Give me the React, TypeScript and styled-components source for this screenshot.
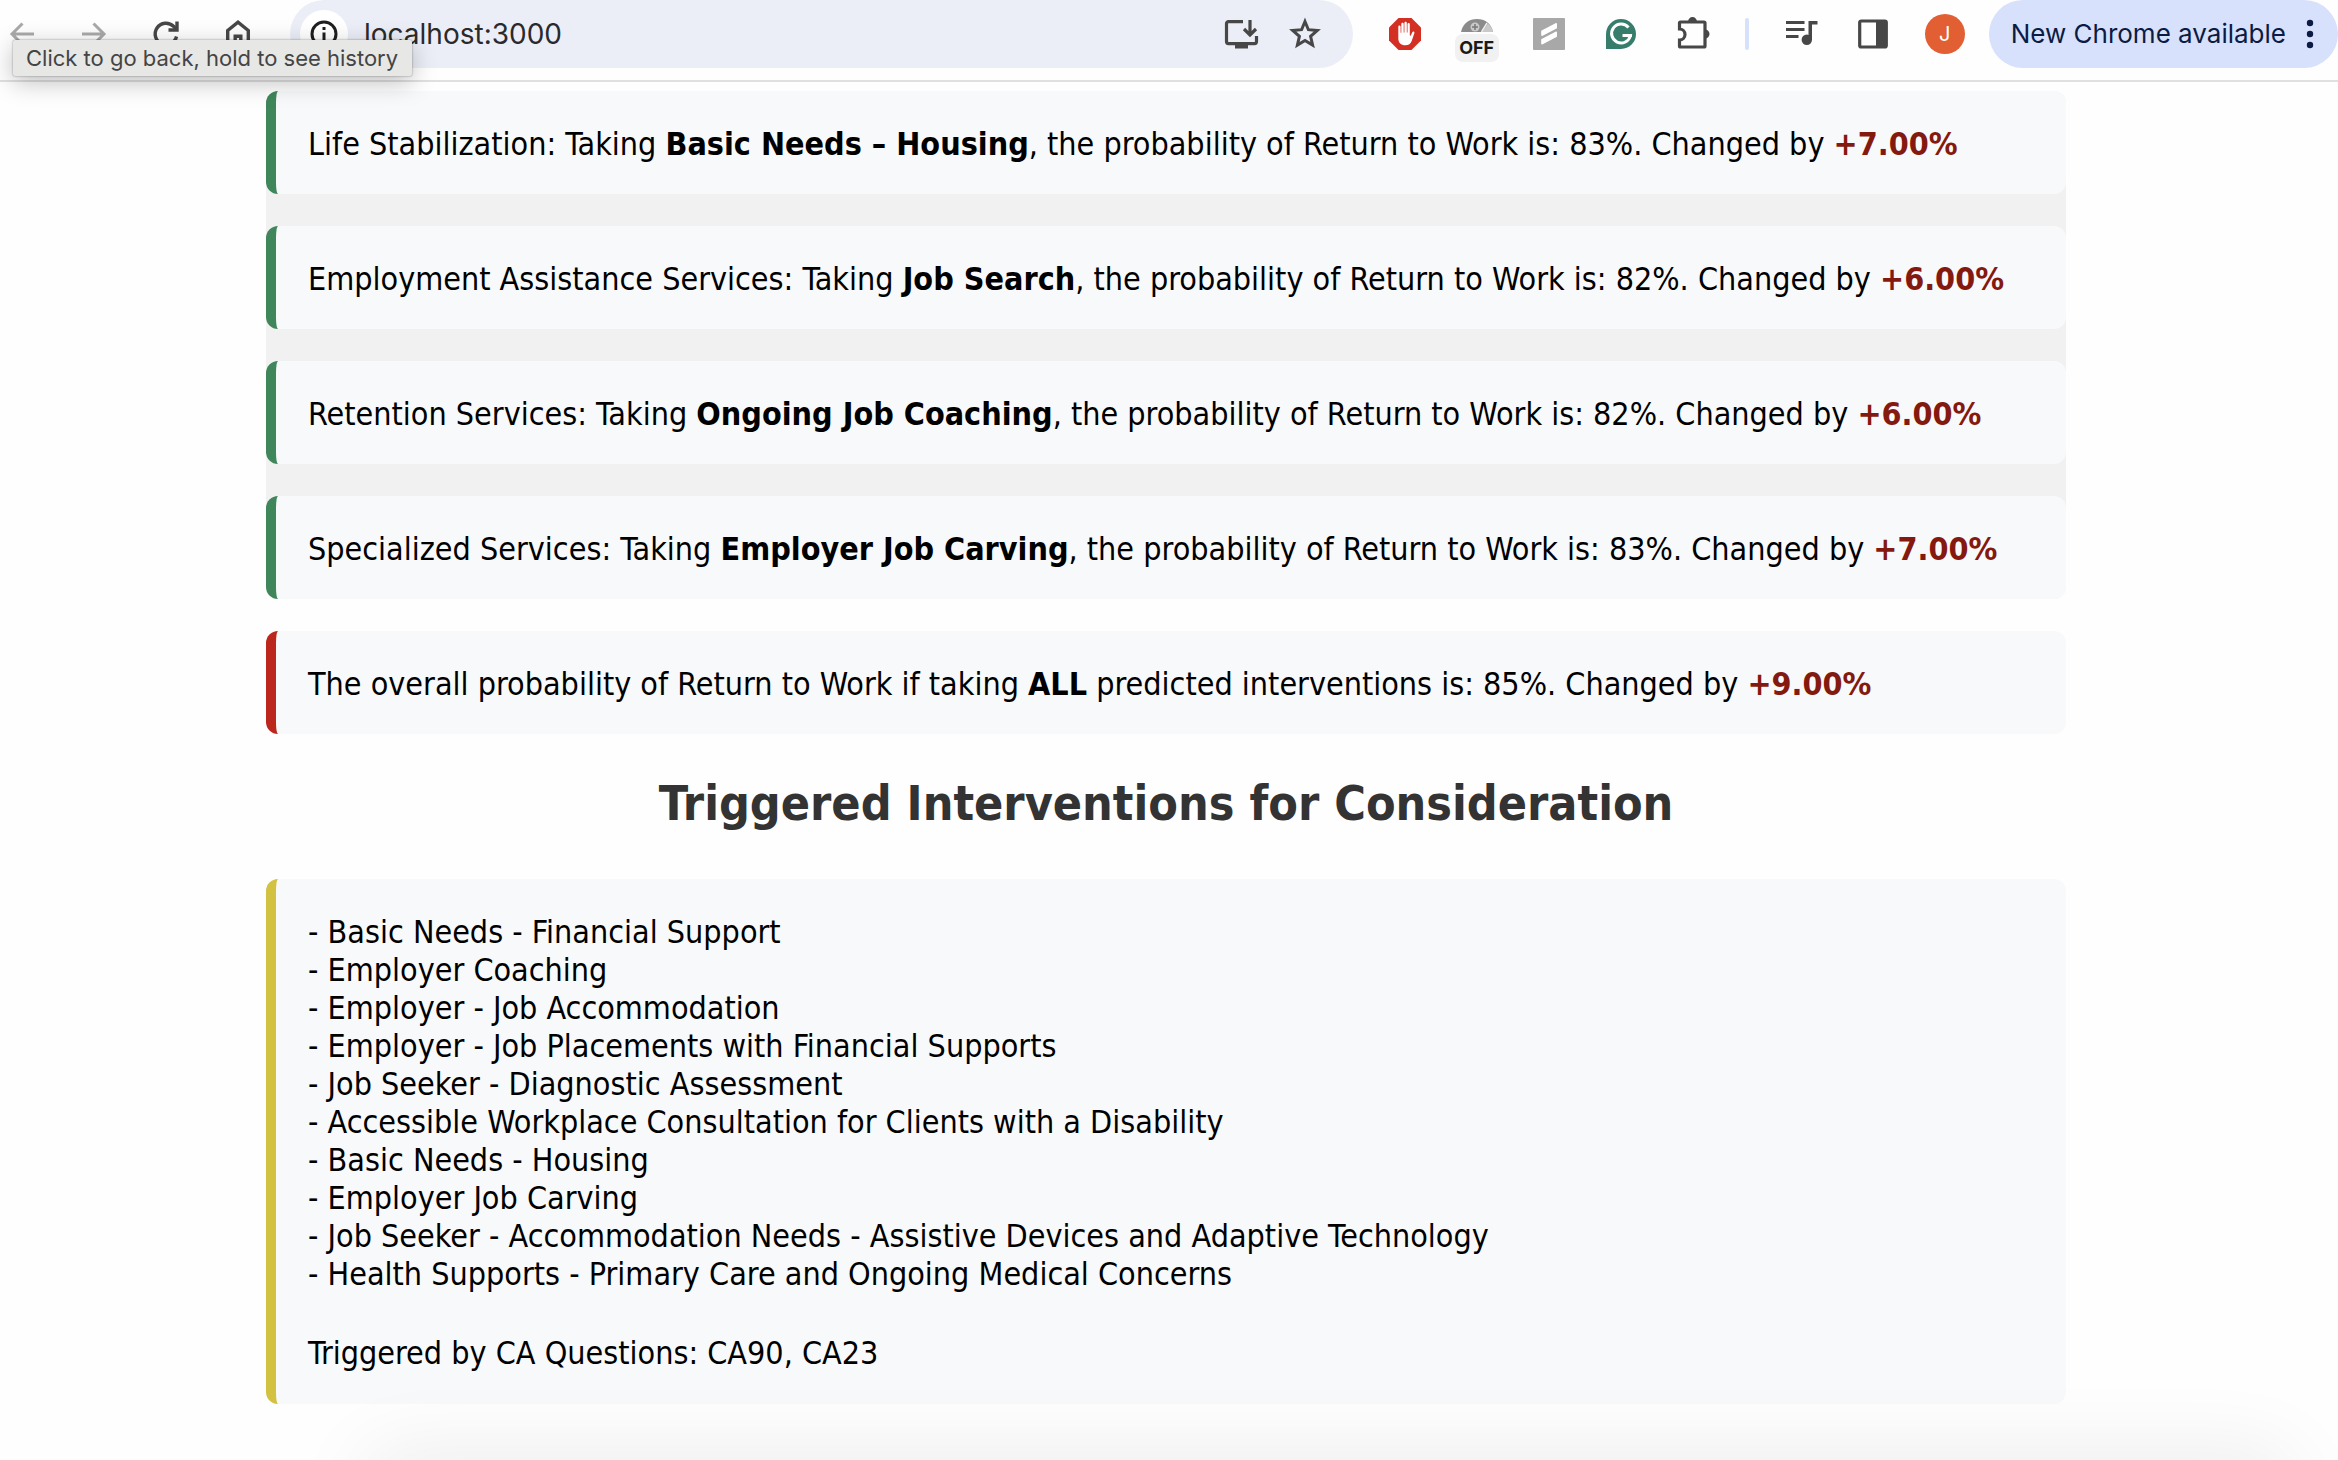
import React from "react";
import styled, { createGlobalStyle } from "styled-components";

const GlobalStyle = createGlobalStyle`
  *, *::before, *::after { box-sizing: border-box; }
  body {
    margin: 0;
    background: #fefefe;
    color: #000;
    font-family: Tahoma, "DejaVu Sans Condensed", "DejaVu Sans", sans-serif;
    font-size: 32px;
    line-height: 38px;
  }
`;

/* ---------- browser toolbar ---------- */

const uiFont = `Inter, Roboto, sans-serif`;

const Toolbar = styled.header`
  position: relative;
  display: flex;
  gap: 30px;
  height: 82px;
  padding-bottom: 12px;
  border-bottom: 2px solid #e0e0e0;
  background: #fefefe;
  font-family: ${uiFont};
`;

const ButtonGroup = styled.div<{ $tight?: boolean }>`
  display: flex;
  align-items: center;
  gap: ${(p) => (p.$tight ? 20 : 28)}px;
`;

const IconButton = styled.button<{ $color?: string }>`
  display: flex;
  align-items: center;
  justify-content: center;
  width: 44px;
  height: 48px;
  padding: 0;
  border: 0;
  background: none;
  color: ${(p) => p.$color ?? "#474747"};
`;

const AddressBar = styled.div`
  display: flex;
  flex: 1;
  align-items: center;
  gap: 16px;
  padding: 0 26px 0 10px;
  border-radius: 34px;
  background: #eceef7;
`;

const SiteInfo = styled(IconButton)`
  width: 48px;
  border-radius: 50%;
  background: #fff;
  color: #1f1f1f;
`;

const AddressInput = styled.input`
  flex: 1;
  min-width: 0;
  padding: 0;
  border: 0;
  outline: 0;
  background: none;
  color: #2a2a2c;
  font: 400 28px/36px ${uiFont};
`;

const Divider = styled.div`
  align-self: center;
  width: 4px;
  height: 32px;
  border-radius: 2px;
  background: #d6e2fb;
`;

const OffExtension = styled(IconButton)`
  flex-direction: column;
  align-self: flex-start;
  justify-content: flex-start;
  height: 62px;
  padding-top: 18px;
`;

const OffLabel = styled.span`
  flex: none;
  width: 44px;
  margin-top: 2px;
  border-radius: 8px;
  background: #f1f1f1;
  color: #1a1a1a;
  font: 700 18px/28px ${uiFont};
  text-align: center;
`;

const Avatar = styled.span`
  width: 40px;
  height: 40px;
  border-radius: 50%;
  background: #e25f34;
  color: #fff;
  font: 400 20px/40px ${uiFont};
  text-align: center;
  flex: none;
`;

const UpdateButton = styled.button`
  display: flex;
  align-items: center;
  gap: 20px;
  margin-left: -8px;
  padding: 0 24px 0 22px;
  border: 0;
  border-radius: 34px;
  background: #d7e1fb;
  color: #0b1b44;
  font: 400 26px/36px ${uiFont};
  white-space: nowrap;
`;

const Tooltip = styled.div`
  position: absolute;
  z-index: 2;
  top: 40px;
  left: 13px;
  padding: 4px 14px 4px 13px;
  border-radius: 2px;
  background: #e7e7e5;
  box-shadow: 0 0 2px rgba(0, 0, 0, 0.45), 0 6px 24px rgba(0, 0, 0, 0.25);
  color: #444;
  font: 400 22px/28px ${uiFont};
  white-space: nowrap;
`;

/* ---------- page ---------- */

const Page = styled.main`
  padding: 9px 38px 56px 32px;
`;

const Column = styled.div`
  max-width: 1800px;
  margin: 0 auto;
`;

const ServiceList = styled.section`
  display: flex;
  flex-direction: column;
  gap: 32px;
  margin-bottom: 32px;
  border-radius: 12px;
  background: #f1f1f1;
`;

const Card = styled.article<{ $accent: string }>`
  padding: 34px 32px 30px;
  border-left: 10px solid ${(p) => p.$accent};
  border-radius: 12px;
  background: #f8f9fb;
`;

const Sentence = styled.p`
  margin: 0;
  line-height: 39px;
`;

const Change = styled.strong`
  color: #84190f;
`;

const Heading = styled.h2`
  margin: 40px 0 47px;
  color: #333;
  font-size: 48px;
  line-height: 58px;
  text-align: center;
`;

const TriggerCard = styled(Card)`
  padding: 34px 32px 32px;
`;

const TriggerList = styled.ul`
  margin: 0 0 41px;
  padding: 0;
  list-style: none;
`;

const TriggerSource = styled.p`
  margin: 0;
`;

const BottomShade = styled.div`
  position: fixed;
  right: 60px;
  bottom: -50px;
  left: 380px;
  height: 40px;
  border-radius: 20px;
  box-shadow: 0 0 80px 20px rgba(0, 0, 0, 0.07);
  pointer-events: none;
`;

const services = [
  { area: "Life Stabilization", action: "Basic Needs – Housing", probability: 83, change: "+7.00%" },
  { area: "Employment Assistance Services", action: "Job Search", probability: 82, change: "+6.00%" },
  { area: "Retention Services", action: "Ongoing Job Coaching", probability: 82, change: "+6.00%" },
  { area: "Specialized Services", action: "Employer Job Carving", probability: 83, change: "+7.00%" },
];

const triggered = [
  "Basic Needs - Financial Support",
  "Employer Coaching",
  "Employer - Job Accommodation",
  "Employer - Job Placements with Financial Supports",
  "Job Seeker - Diagnostic Assessment",
  "Accessible Workplace Consultation for Clients with a Disability",
  "Basic Needs - Housing",
  "Employer Job Carving",
  "Job Seeker - Accommodation Needs - Assistive Devices and Adaptive Technology",
  "Health Supports - Primary Care and Ongoing Medical Concerns",
];

const Stroke = ({ size, children, w = 3 }: { size: number; w?: number; children: React.ReactNode }) => (
  <svg width={size} height={size} viewBox={`0 0 ${size} ${size}`} fill="none" stroke="currentColor" strokeWidth={w} aria-hidden="true">
    {children}
  </svg>
);

const BackIcon = () => (
  <Stroke size={32}><path d="M28 16H6M16.500 5.500L6 16l10.500 10.500" /></Stroke>
);
const ForwardIcon = () => (
  <Stroke size={32}><path d="M4 16h22M15.500 5.500L26 16 15.500 26.500" /></Stroke>
);
const ReloadIcon = () => (
  <Stroke size={32}>
    <path d="M26.500 18.500A10.800 10.800 0 1 1 23.500 8.300L27 11.800" strokeWidth="3.400" />
    <path d="M27 3.500V12h-8.500" strokeWidth="3.400" />
  </Stroke>
);
const HomeIcon = () => (
  <Stroke size={32} w={3.4}><path d="M5.700 26.500V12.500L16 4.200l10.300 8.300v14h-7.500v-8.300h-5.600v8.300z" /></Stroke>
);
const InfoIcon = () => (
  <Stroke size={32} w={3}>
    <circle cx="16" cy="16" r="12" />
    <path d="M16 14.500v8M16 9v3" />
  </Stroke>
);
const InstallIcon = () => (
  <svg width="36" height="32" viewBox="0 0 36 32" fill="none" stroke="currentColor" strokeWidth="3.200" aria-hidden="true">
    <path d="M20 3.600H5.500a2 2 0 0 0-2 2v18a2 2 0 0 0 2 2h26a2 2 0 0 0 2-2V18" />
    <path d="M27 2v14.500M21 11l6 6 6-6" />
    <path d="M12 25.500h13v5H12z" fill="currentColor" stroke="none" />
  </svg>
);
const StarIcon = () => (
  <Stroke size={36}>
    <path d="M18 5.500l3.400 8.200 8.900.8-6.700 5.900 2 8.700L18 24.400l-7.600 4.700 2-8.700-6.700-5.900 8.900-.8z" />
  </Stroke>
);
const BlockerIcon = () => (
  <svg width="32" height="32" viewBox="0 0 32 32" aria-hidden="true">
    <path d="M9.500 0h13L32 9.500v13L22.500 32h-13L0 22.500v-13z" fill="#d32f23" />
    <path d="M9.300 8.600c0-1.500 2.300-1.500 2.300 0v6.200h.7V6c0-1.600 2.400-1.600 2.400 0v8.500h.7V4.900c0-1.600 2.400-1.600 2.400 0v9.600h.7V6.100c0-1.500 2.300-1.500 2.300 0v11.300l.9.300 1.600-3.500c.7-1.400 2.500-.8 2.100.7l-2.700 8.200c-1 2.800-3 4.200-6.300 4.200-4.500 0-7.100-2.500-7.100-7z" fill="#fff" />
  </svg>
);
const DialIcon = () => (
  <svg width="32" height="14" viewBox="0 0 32 14" aria-hidden="true">
    <path d="M0 14C2 5 8 1 16 1s14 4 16 13z" fill="#8b8b8b" />
    <path d="M21 14l6-8.500c2.500 2 4.200 5 5 8.500z" fill="#c9c9c9" />
    <path d="M20.500 14l5.500-9" stroke="#eee" strokeWidth="1.500" />
    <circle cx="14" cy="9" r="4.500" fill="#c9c9c9" />
    <path d="M14 6v6M11 9h6" stroke="#777" strokeWidth="1.500" />
  </svg>
);
const SlashIcon = () => (
  <svg width="32" height="32" viewBox="0 0 32 32" aria-hidden="true">
    <rect width="32" height="32" rx="1" fill="#a8a8a8" />
    <path d="M8.200 12.800L22.500 5.200c.9-.4 1.500 0 1.500.8v4.200L9.700 17.800c-.9.400-1.500 0-1.500-.8z" fill="#fff" />
    <path d="M8.200 21.300l14.300-7.600c.9-.4 1.500 0 1.500.8v4.200L9.700 26.300c-.9.400-1.500 0-1.500-.8z" fill="#fff" />
  </svg>
);
const GrammarIcon = () => (
  <svg width="30" height="30" viewBox="0 0 30 30" fill="none" aria-hidden="true">
    <path d="M15 0a15 15 0 1 1 0 30H0V15A15 15 0 0 1 15 0z" fill="#377d6b" />
    <path d="M22.500 8.500A9.500 9.500 0 1 0 24.400 16.500H16.500" stroke="#fff" strokeWidth="3" />
    <path d="M21 16.500h5" stroke="#fff" strokeWidth="3" />
  </svg>
);
const PuzzleIcon = () => (
  <svg width="36" height="36" viewBox="0 0 36 36" fill="none" aria-hidden="true">
    <path d="M5.500 6H29a1 1 0 0 1 1 1v23a1 1 0 0 1-1 1H5.500a1 1 0 0 1-1-1v-6a5.300 5.300 0 0 0 0-11V7a1 1 0 0 1 1-1z" stroke="currentColor" strokeWidth="3.200" />
    <path d="M13 6a4.500 5 0 0 1 9 0zM30 13.500a4.500 4.500 0 0 1 0 9z" fill="currentColor" />
  </svg>
);
const QueueIcon = () => (
  <svg width="36" height="32" viewBox="0 0 36 32" fill="none" aria-hidden="true">
    <path d="M3 4.500h18.500M3 11.500h18.500M3 18.500h12.500" stroke="currentColor" strokeWidth="3" />
    <path d="M25.500 3h9v3.600h-5.500V22h-3.500z" fill="currentColor" />
    <circle cx="23.800" cy="21.800" r="5.200" fill="currentColor" />
  </svg>
);
const PanelIcon = () => (
  <svg width="30" height="30" viewBox="0 0 30 30" fill="none" aria-hidden="true">
    <rect x="1.700" y="2" width="26.600" height="26" rx="1.500" stroke="currentColor" strokeWidth="3.200" />
    <path d="M18 2h10v26H18z" fill="currentColor" />
  </svg>
);
const MoreIcon = () => (
  <svg width="8" height="32" viewBox="0 0 8 32" fill="currentColor" aria-hidden="true">
    <circle cx="4" cy="5" r="3.200" />
    <circle cx="4" cy="16" r="3.200" />
    <circle cx="4" cy="27" r="3.200" />
  </svg>
);

export default function App() {
  return (
    <>
      <GlobalStyle />
      <Toolbar>
        <ButtonGroup>
          <IconButton $color="#a9a9a9" aria-label="Back"><BackIcon /></IconButton>
          <IconButton $color="#a9a9a9" aria-label="Forward"><ForwardIcon /></IconButton>
          <IconButton aria-label="Reload"><ReloadIcon /></IconButton>
          <IconButton aria-label="Home"><HomeIcon /></IconButton>
        </ButtonGroup>
        <AddressBar>
          <SiteInfo aria-label="Site information"><InfoIcon /></SiteInfo>
          <AddressInput aria-label="Address" defaultValue="localhost:3000" />
          <ButtonGroup $tight>
            <IconButton aria-label="Install app"><InstallIcon /></IconButton>
            <IconButton aria-label="Bookmark"><StarIcon /></IconButton>
          </ButtonGroup>
        </AddressBar>
        <ButtonGroup>
          <IconButton aria-label="Ad blocker"><BlockerIcon /></IconButton>
          <OffExtension>
            <DialIcon />
            <OffLabel>OFF</OffLabel>
          </OffExtension>
          <IconButton aria-label="Shortcuts"><SlashIcon /></IconButton>
          <IconButton aria-label="Grammar"><GrammarIcon /></IconButton>
          <IconButton aria-label="Extensions"><PuzzleIcon /></IconButton>
        </ButtonGroup>
        <Divider />
        <ButtonGroup>
          <IconButton aria-label="Media"><QueueIcon /></IconButton>
          <IconButton aria-label="Side panel"><PanelIcon /></IconButton>
          <IconButton aria-label="Profile"><Avatar>J</Avatar></IconButton>
        </ButtonGroup>
        <UpdateButton>
          New Chrome available
          <MoreIcon />
        </UpdateButton>
        <Tooltip role="tooltip">Click to go back, hold to see history</Tooltip>
      </Toolbar>

      <Page>
        <Column>
          <ServiceList>
            {services.map((s) => (
              <Card key={s.area} $accent="#3f875a">
                <Sentence>
                  {s.area}: Taking <strong>{s.action}</strong>, the probability of Return to Work is: {s.probability}%. Changed by{" "}
                  <Change>{s.change}</Change>
                </Sentence>
              </Card>
            ))}
          </ServiceList>
          <Card $accent="#bc271d">
            <Sentence>
              The overall probability of Return to Work if taking <strong>ALL</strong> predicted interventions is: 85%. Changed by{" "}
              <Change>+9.00%</Change>
            </Sentence>
          </Card>
          <Heading>Triggered Interventions for Consideration</Heading>
          <TriggerCard $accent="#d3c141">
            <TriggerList>
              {triggered.map((t) => (
                <li key={t}>- {t}</li>
              ))}
            </TriggerList>
            <TriggerSource>Triggered by CA Questions: CA90, CA23</TriggerSource>
          </TriggerCard>
        </Column>
      </Page>
      <BottomShade />
    </>
  );
}
